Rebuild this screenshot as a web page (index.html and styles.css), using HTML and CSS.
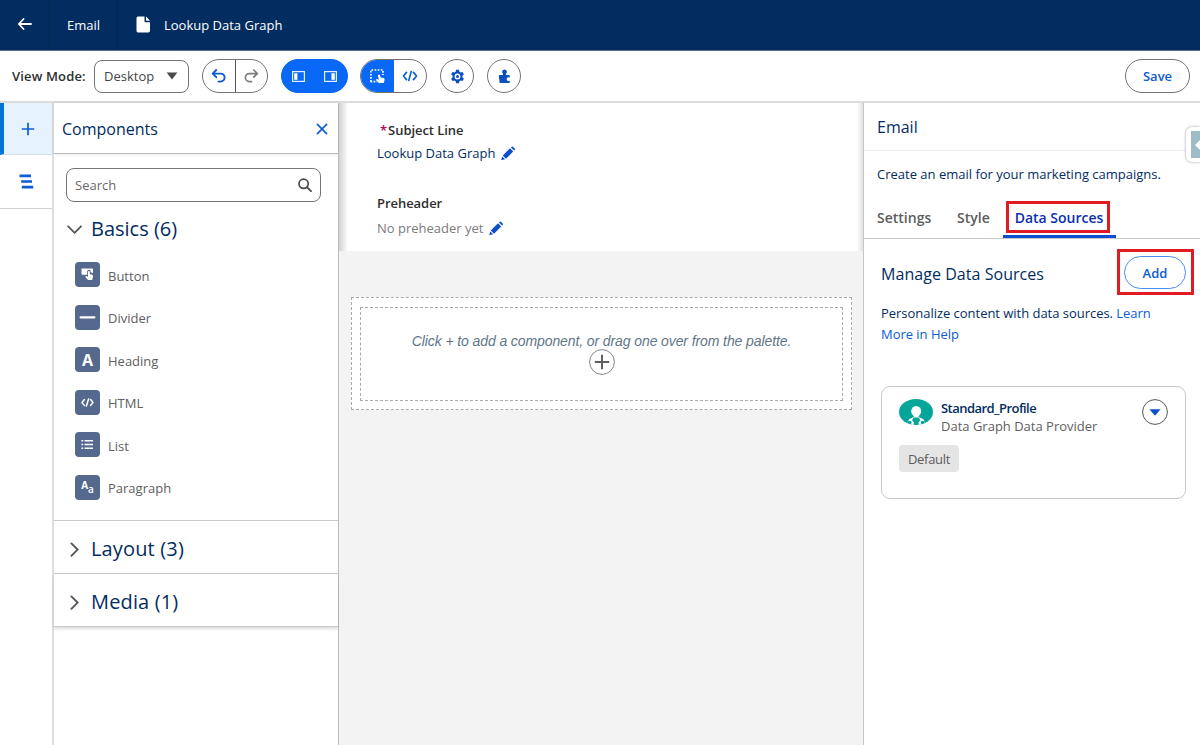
FILE: index.html
```
<!DOCTYPE html>
<html lang="en">

<head>
    <meta charset="UTF-8">
    <meta name="viewport" content="width=device-width, initial-scale=1.0">
    <title>Lookup Data Graph</title>
    <link rel="stylesheet" href="styles.css">
</head>

<body>
    <header>
        <a class="back">
            <svg width="16" height="14" viewBox="0 0 16 14"><path d="M14 7H2M6.6 2L1.8 7L6.6 12" fill="none" stroke="#fff" stroke-width="1.8" stroke-linecap="round" stroke-linejoin="round"/></svg>
        </a>
        <span class="crumb">Email</span>
        <span class="title">
            <svg width="15" height="17" viewBox="0 0 15 17"><path d="M2 .5H8.5V5.2Q8.5 6.3 9.6 6.3H14V14.8Q14 16.5 12.3 16.5H2Q.5 16.5 .5 14.8V2.2Q.5 .5 2 .5Z" fill="#fff"/><path d="M10 .6L14 4.8H10.6Q10 4.8 10 4.2Z" fill="#fff"/></svg>
            <span>Lookup Data Graph</span>
        </span>
    </header>

    <div class="toolbar">
        <span class="label">View Mode:</span>
        <div class="select"><span>Desktop</span>
            <svg width="12" height="8" viewBox="0 0 12 8"><path d="M.6 .5H11.4L6 7.6Z" fill="#4a4a4a"/></svg>
        </div>
        <div class="group undo">
            <span><svg width="16" height="16" viewBox="0 0 16 16"><path d="M5.2 2L1.7 5.6L5.2 9.2M2 5.6H9.6A4 4 0 0 1 9.6 13.6H7.4" fill="none" stroke="#0b5cd5" stroke-width="1.9" stroke-linecap="round" stroke-linejoin="round"/></svg></span>
            <span><svg width="16" height="16" viewBox="0 0 16 16"><path d="M10.8 2L14.3 5.6L10.8 9.2M14 5.6H6.4A4 4 0 0 0 6.4 13.6H8.6" fill="none" stroke="#7d7d7d" stroke-width="1.7" stroke-linecap="round" stroke-linejoin="round"/></svg></span>
        </div>
        <div class="group panels">
            <span><svg width="13" height="11" viewBox="0 0 13 11"><rect x=".6" y=".6" width="11.8" height="9.8" fill="none" stroke="#e3eeff" stroke-width="1.2"/><rect x="2.2" y="2.2" width="3.2" height="6.6" fill="#fff"/></svg></span>
            <span><svg width="13" height="11" viewBox="0 0 13 11"><rect x=".6" y=".6" width="11.8" height="9.8" fill="none" stroke="#e3eeff" stroke-width="1.2"/><rect x="7.4" y="2.2" width="3.4" height="6.6" fill="#fff"/></svg></span>
        </div>
        <div class="group modes">
            <span class="on"><svg width="15" height="15" viewBox="0 0 15 15"><path d="M.9 12.8V1H12.9V6" fill="none" stroke="#fff" stroke-width="1.7" stroke-dasharray="1.7 1.4"/><path d="M.5 12.7H7" fill="none" stroke="#fff" stroke-width="1.7" stroke-dasharray="1.7 1.4"/><path d="M8.3 5.8Q9.3 5 9.9 6.1L10.6 8.4L13.6 9.1Q14.8 9.5 14.6 10.8L13.8 14H8.8L6 11.2Q6 9.8 7.4 10.2L8.9 10.8L7.9 7Q7.8 6.2 8.3 5.8Z" fill="#fff"/></svg></span>
            <span><svg width="16" height="12" viewBox="0 0 16 12"><path d="M4.5 2.4L1.5 6L4.5 9.6M11.5 2.4L14.5 6L11.5 9.6M9.2 1.6L6.8 10.4" fill="none" stroke="#0b5cd5" stroke-width="1.7" stroke-linecap="round" stroke-linejoin="round"/></svg></span>
        </div>
        <span class="round">
            <svg width="15" height="15" viewBox="0 0 15 15"><path d="M6.1 .8H8.9L9.4 2.8L10.5 3.5L12.5 2.9L13.9 5.3L12.4 6.8V8.2L13.9 9.7L12.5 12.1L10.5 11.5L9.4 12.2L8.9 14.2H6.1L5.6 12.2L4.5 11.5L2.5 12.1L1.1 9.7L2.6 8.2V6.8L1.1 5.3L2.5 2.9L4.5 3.5L5.6 2.8Z" fill="#0b4fc0"/><circle cx="7.5" cy="7.5" r="2.9" fill="#fff"/><circle cx="7.5" cy="7.5" r="1.5" fill="#0b4fc0"/></svg>
        </span>
        <span class="round">
            <svg width="13" height="15" viewBox="0 0 13 15"><path d="M1.5 6H4.9V4.6A2.3 2.3 0 1 1 8.1 4.6V6H10.8Q11.8 6 11.8 7V8.4Q8.6 7.6 8.6 10.1Q8.6 12.6 11.8 11.8V13Q11.8 14 10.8 14H2.4Q1.4 14 1.4 13V10.6Q.9 9 .9 8V6.6Q.9 6 1.5 6Z" fill="#0b4fc0"/></svg>
        </span>
        <button class="save">Save</button>
    </div>

    <main>
        <nav>
            <a class="active"><svg width="14" height="14" viewBox="0 0 14 14"><path d="M7 .8V13.2M.8 7H13.2" stroke="#0b5cd5" stroke-width="1.7"/></svg></a>
            <a><svg width="15" height="15" viewBox="0 0 15 15"><path d="M.5 1.8H12M2.2 7.5H13M2.8 13.2H14.2" stroke="#0b5cd5" stroke-width="2.7"/></svg></a>
        </nav>

        <section class="components">
            <div class="panel-head">
                <h2>Components</h2>
                <svg width="12" height="12" viewBox="0 0 12 12"><path d="M1.4 1.4L10.6 10.6M10.6 1.4L1.4 10.6" stroke="#0b5cd5" stroke-width="1.7" stroke-linecap="round"/></svg>
            </div>
            <div class="basics">
                <div class="search"><span>Search</span>
                    <svg width="16" height="16" viewBox="0 0 16 16"><circle cx="6.6" cy="6.8" r="4.6" fill="none" stroke="#4a4a4a" stroke-width="1.7"/><path d="M10.2 10.4L14 14.2" stroke="#4a4a4a" stroke-width="1.9" stroke-linecap="round"/></svg>
                </div>
                <h3>
                    <svg width="16" height="10" viewBox="0 0 16 10"><path d="M2.2 2.3L8.6 8.8L15 2.3" fill="none" stroke="#555" stroke-width="1.8" stroke-linecap="round"/></svg>
                    <span>Basics (6)</span>
                </h3>
                <ul>
                    <li><i><svg viewBox="0 0 25 25"><path d="M6.5 6.5H17.2Q18 6.5 18 7.3V11L15.6 10.3V9Q14 6.7 12.2 9V12.7H7.3Q6.5 12.7 6.5 12Z" fill="#fff"/><path d="M13 9.6Q13.9 8.6 14.8 9.6V12.1L17.2 12.8Q18.2 13.2 18 14.3L17.2 18H13L10.3 14.7Q10.6 13.4 12 14.2L13 14.9Z" fill="#fff"/></svg></i><span>Button</span></li>
                    <li><i><svg viewBox="0 0 25 25"><path d="M5.6 12.3H19.4" stroke="#fff" stroke-width="2.2" stroke-linecap="round"/></svg></i><span>Divider</span></li>
                    <li><i class="glyph">A</i><span>Heading</span></li>
                    <li><i><svg viewBox="0 0 25 25"><path d="M9.4 9.6L7 12.5L9.4 15.4M15.6 9.6L18 12.5L15.6 15.4M13.6 9L11.4 16" fill="none" stroke="#fff" stroke-width="1.5" stroke-linecap="round" stroke-linejoin="round"/></svg></i><span>HTML</span></li>
                    <li><i><svg viewBox="0 0 25 25"><path d="M9.5 8.8H18M9.5 12.5H18M9.5 16.2H18" stroke="#fff" stroke-width="1.6"/><path d="M6.4 8.8H8.2M6.4 12.5H8.2M6.4 16.2H8.2" stroke="#fff" stroke-width="1.6"/></svg></i><span>List</span></li>
                    <li><i class="para"><b>A</b><small>a</small></i><span>Paragraph</span></li>
                </ul>
            </div>
            <h3 class="closed">
                <svg width="10" height="16" viewBox="0 0 10 16"><path d="M2.4 2.4L8.6 8.6L2.4 14.8" fill="none" stroke="#555" stroke-width="1.9" stroke-linecap="round"/></svg>
                <span>Layout (3)</span>
            </h3>
            <h3 class="closed last">
                <svg width="10" height="16" viewBox="0 0 10 16"><path d="M2.4 2.4L8.6 8.6L2.4 14.8" fill="none" stroke="#555" stroke-width="1.9" stroke-linecap="round"/></svg>
                <span>Media (1)</span>
            </h3>
        </section>

        <section class="canvas">
            <div class="subject">
                <p class="field"><em>*</em>Subject Line</p>
                <p class="value"><span>Lookup Data Graph</span>
                    <svg width="15" height="15" viewBox="0 0 15 15"><path d="M1.8 9.5L9 2.3L12.2 5.5L5 12.7Z" fill="#0b4fd0"/><path d="M9.9 1.5L10.8 .7Q11.3 .3 11.8 .7L13.9 2.8Q14.3 3.3 13.8 3.8L13 4.6Z" fill="#0b4fd0"/><path d="M1.2 10.4L4.1 13.3L.8 14.1Q.3 14.2 .4 13.6Z" fill="#0b4fd0"/></svg>
                </p>
                <p class="field pre">Preheader</p>
                <p class="value low"><span class="empty">No preheader yet</span>
                    <svg width="15" height="15" viewBox="0 0 15 15"><path d="M1.8 9.5L9 2.3L12.2 5.5L5 12.7Z" fill="#0b4fd0"/><path d="M9.9 1.5L10.8 .7Q11.3 .3 11.8 .7L13.9 2.8Q14.3 3.3 13.8 3.8L13 4.6Z" fill="#0b4fd0"/><path d="M1.2 10.4L4.1 13.3L.8 14.1Q.3 14.2 .4 13.6Z" fill="#0b4fd0"/></svg>
                </p>
            </div>
            <div class="drop">
                <div class="drop-inner">
                    <p>Click + to add a component, or drag one over from the palette.</p>
                    <svg width="27" height="27" viewBox="0 0 27 27"><circle cx="14" cy="13" r="12.4" fill="#fff" stroke="#858585"/><path d="M14 5.8V20.2M6.8 13H21.2" stroke="#606060" stroke-width="2"/></svg>
                </div>
            </div>
        </section>

        <aside>
            <h2>Email</h2>
            <p class="about">Create an email for your marketing campaigns.</p>
            <div class="tabs">
                <span class="settings">Settings</span>
                <span class="style">Style</span>
                <span class="current"><span class="marked">Data Sources</span></span>
            </div>
            <div class="manage">
                <h2>Manage Data Sources</h2>
                <div class="marked-add"><button>Add</button></div>
            </div>
            <p class="help">Personalize content with data sources. <a>Learn<br>More in Help</a></p>
            <div class="card">
                <div class="card-top">
                    <svg width="34" height="26" viewBox="0 0 34 26"><defs><clipPath id="oval"><ellipse cx="17" cy="13" rx="17" ry="13"/></clipPath></defs><g clip-path="url(#oval)"><rect width="34" height="26" fill="#06a59a"/><ellipse cx="17.2" cy="12.2" rx="5" ry="5.2" fill="#fff"/><path d="M14.8 15H19.6V18L24.5 20.3L27 26H7.5L10 20.3L14.8 18Z" fill="#fff"/><path d="M14.6 18.6H19.8L21.3 21.2L19.6 23.6V26H14.8V23.6L13.1 21.2Z" fill="#06a59a"/><circle cx="10.7" cy="23.6" r="1.9" fill="#06a59a"/><circle cx="23.7" cy="23.6" r="1.9" fill="#06a59a"/></g></svg>
                    <div class="source">
                        <strong>Standard_Profile</strong>
                        <span>Data Graph Data Provider</span>
                    </div>
                    <svg class="more" width="26" height="26" viewBox="0 0 26 26"><circle cx="13" cy="13" r="12.4" fill="#fff" stroke="#555"/><path d="M7.4 10.3H18.6L13 16.8Z" fill="#0b4fd0"/></svg>
                </div>
                <span class="badge">Default</span>
            </div>
        </aside>
        <div class="drawer"><span></span></div>
    </main>
</body>

</html>
```
FILE: styles.css
```
* {
    margin: 0;
    padding: 0;
    box-sizing: border-box;
}

body {
    width: 1200px;
    height: 745px;
    overflow: hidden;
    background: #fff;
    color: #032d60;
    font-family: "Open Sans", "Noto Sans", sans-serif;
    font-size: 13px;
    white-space: nowrap;
}

svg {
    display: block;
    flex: none;
}

h2, h3 {
    font-weight: 400;
}

header {
    display: flex;
    height: 51px;
    background: #032d60;
    border-bottom: 1px solid #5a6d94;
    color: #fff;
}

.back {
    width: 50px;
    padding: 17px 0 0 17px;
    border-right: 1px solid #06264f;
}

.crumb {
    width: 68px;
    padding-left: 17px;
    line-height: 50px;
    border-right: 1px solid #06264f;
}

.title {
    display: flex;
    align-items: center;
    gap: 13px;
    height: 49px;
    padding-left: 18px;
}

.toolbar {
    display: flex;
    align-items: center;
    height: 52px;
    padding: 0 10px 0 12px;
    border-bottom: 2px solid #dcdcdc;
}

.label {
    width: 82px;
    color: #2e2e2e;
    font-weight: 600;
    letter-spacing: .15px;
}

.select {
    display: flex;
    align-items: center;
    justify-content: space-between;
    width: 95px;
    height: 33px;
    padding: 0 10px 0 9px;
    border: 1px solid #747474;
    border-radius: 8px;
    color: #444;
}

.group {
    display: flex;
    height: 34px;
    border: 1px solid #747474;
    border-radius: 17px;
    overflow: hidden;
}

.group span {
    flex: 1;
    display: flex;
    align-items: center;
    justify-content: center;
}

.undo {
    width: 66px;
    margin-left: 13px;
}

.undo span:first-child {
    border-right: 1px solid #555;
}

.panels {
    width: 67px;
    margin-left: 13px;
    background: #0968f6;
    border-color: #0968f6;
}

.modes {
    width: 67px;
    margin: 0 13px 0 12px;
}

.modes .on {
    background: #0968f6;
}

.round {
    display: flex;
    align-items: center;
    justify-content: center;
    width: 34px;
    height: 34px;
    margin-right: 13px;
    border: 1px solid #747474;
    border-radius: 50%;
}

button {
    background: #fff;
    border-radius: 17px;
    color: #0b5cd5;
    font-family: inherit;
    font-size: 13px;
    font-weight: 600;
}

.save {
    width: 65px;
    height: 34px;
    margin-left: auto;
    border: 1px solid #747474;
}

main {
    position: relative;
    display: flex;
    height: 642px;
}

nav {
    width: 54px;
    border-right: 2px solid #dedede;
}

nav a {
    display: flex;
    align-items: center;
    justify-content: center;
    height: 54px;
    border-bottom: 1px solid #d2d2d2;
}

nav a.active {
    height: 52px;
    background: #e6f2fd;
    border-left: 4px solid #0176d3;
    border-bottom: 1px solid #d5dfe8;
}

.components {
    width: 285px;
    border-right: 1px solid #bdbdbd;
}

.panel-head {
    display: flex;
    align-items: center;
    justify-content: space-between;
    height: 51px;
    padding: 2px 10px 0 8px;
    border-bottom: 1px solid #bdbdbd;
    box-shadow: 0 0 4px rgba(0, 0, 0, .12);
}

h2 {
    font-size: 16px;
}

.basics {
    height: 367px;
    padding: 14px 17px 0 12px;
    border-bottom: 1px solid #c9c9c9;
}

.search {
    display: flex;
    align-items: center;
    justify-content: space-between;
    height: 34px;
    padding: 0 7px 0 8px;
    border: 1px solid #747474;
    border-radius: 8px;
    color: #6a6a6a;
}

h3 {
    display: flex;
    align-items: center;
    font-size: 20px;
    line-height: 28px;
}

h3 span {
    margin-left: 9px;
}

.basics h3 {
    margin-top: 13px;
}

.closed {
    height: 53px;
    padding: 4px 0 0 15px;
    border-bottom: 1px solid #c9c9c9;
    letter-spacing: .15px;
}

.closed span {
    margin-left: 12px;
}

.last {
    box-shadow: 0 2px 3px rgba(0, 0, 0, .15);
}

ul {
    margin-top: 19px;
    padding-left: 9px;
    list-style: none;
}

li {
    display: flex;
    align-items: center;
    height: 25px;
    margin-bottom: 17.5px;
    color: #606060;
}

li > span {
    padding-top: 2px;
}

li i {
    display: flex;
    align-items: center;
    justify-content: center;
    width: 25px;
    height: 25px;
    margin-right: 8px;
    background: #54698d;
    border-radius: 4px;
    color: #fff;
    font-style: normal;
}

.glyph {
    font-size: 16px;
    font-weight: 700;
}

.para {
    font-size: 10px;
    line-height: 12px;
}

.para b {
    padding-bottom: 4px;
}

.para small {
    padding-top: 3px;
    font-size: 10px;
    font-weight: 600;
}

.canvas {
    width: 524px;
    background: #f3f3f3;
}

.subject {
    height: 148px;
    padding: 17px 0 0 38px;
    background: linear-gradient(90deg, #d2d2d2, #fff 9px, #fff 518px, #e0e0e0);
}

.field {
    color: #2e2e2e;
    font-weight: 600;
    line-height: 20px;
    letter-spacing: -.05px;
}

.field em {
    margin: 0 1px 0 3px;
    color: #b60554;
    font-style: normal;
}

.pre {
    margin-top: 30px;
}

.value {
    display: flex;
    align-items: center;
    gap: 6px;
    height: 20px;
    margin-top: 3px;
}

.low {
    margin-top: 5px;
}

.empty {
    color: #7b7b7b;
}

.drop {
    height: 113px;
    margin: 46px 11px 0 12px;
    padding: 9px 8px;
    background: #fff;
    border: 1px dashed #aaa;
}

.drop-inner {
    display: flex;
    flex-direction: column;
    align-items: center;
    height: 94px;
    padding-top: 25px;
    border: 1px dashed #aaa;
}

.drop p {
    color: #5f7688;
    font: italic 14px/16px "Liberation Sans", Arial, sans-serif;
    letter-spacing: -.1px;
}

aside {
    width: 337px;
    border-left: 1px solid #c6c6c6;
}

aside > h2 {
    height: 48px;
    padding: 0 13px;
    line-height: 49px;
    border-bottom: 1px solid #eee;
}

.about {
    height: 50px;
    padding-left: 13px;
    line-height: 47px;
}

.tabs {
    display: flex;
    height: 38px;
    padding-left: 13px;
    border-bottom: 1px solid #c9c9c9;
    color: #5c5c5c;
    font-size: 14px;
    font-weight: 600;
}

.tabs > span {
    line-height: 33px;
}

.settings {
    width: 80px;
}

.style {
    width: 46px;
}

.current {
    width: 113px;
    border-bottom: 3px solid #0b4fd0;
    color: #0b2fae;
}

.marked {
    display: block;
    width: 104px;
    height: 32px;
    margin-left: 3px;
    padding-left: 2px;
    border: 3px solid #e01b24;
    line-height: 27px;
    text-align: center;
}

.manage {
    display: flex;
    align-items: center;
    justify-content: space-between;
    margin-top: 10px;
    padding: 0 6px 0 17px;
}

.manage h2 {
    padding-top: 3px;
    letter-spacing: .05px;
}

.marked-add {
    width: 77px;
    height: 46px;
    padding: 4px;
    border: 3px solid #e01b24;
}

.marked-add button {
    width: 62px;
    height: 33px;
    border: 1px solid #4b8df0;
}

.help {
    margin: 8px 0 0 17px;
    line-height: 21px;
    letter-spacing: -.03px;
}

.help a {
    color: #0b5cd5;
}

.card {
    width: 305px;
    height: 113px;
    margin: 41px 0 0 17px;
    padding: 12px 17px;
    border: 1px solid #c9c9c9;
    border-radius: 9px;
}

.card-top {
    display: flex;
}

.source {
    margin-left: 8px;
    line-height: 18px;
}

.source strong, .source span {
    display: block;
}

.source strong {
    font-weight: 600;
    letter-spacing: -.55px;
}

.source span {
    color: #606060;
}

.more {
    margin-left: auto;
}

.badge {
    display: inline-block;
    width: 60px;
    height: 27px;
    margin-top: 10px;
    background: #e5e5e5;
    border-radius: 4px;
    color: #5c5c5c;
    line-height: 28px;
    letter-spacing: -.3px;
    text-align: center;
}

/* collapsed help drawer on the right edge */
.drawer {
    position: absolute;
    top: 24px;
    right: 0;
    width: 14px;
    height: 35px;
    padding: 4px 0 4px 5px;
    background: #fff;
    border-radius: 6px 0 0 6px;
    box-shadow: 0 0 3px rgba(0, 0, 0, .4);
}

.drawer span {
    display: block;
    height: 27px;
    padding: 9px 0 0 4px;
    background: #9fbcc6;
}

.drawer span::after {
    content: "";
    display: block;
    border: 5px solid transparent;
    border-left: 0;
    border-right-color: #fff;
}
```
